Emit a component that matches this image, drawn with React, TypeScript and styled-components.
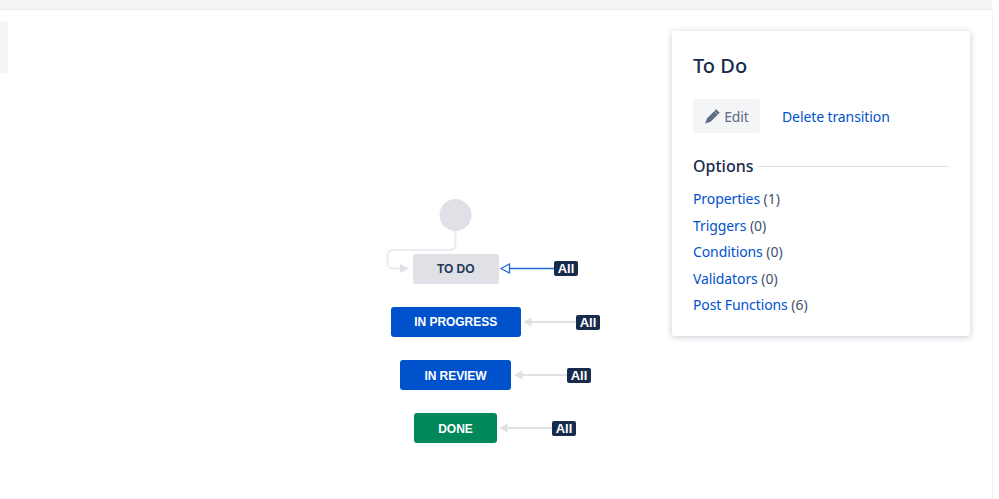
import React from 'react';
import styled, { createGlobalStyle } from 'styled-components';

const GlobalStyle = createGlobalStyle`
  html, body {
    margin: 0;
    padding: 0;
    background: #ffffff;
    font-family: "Noto Sans", "Liberation Sans", sans-serif;
    overflow: hidden;
  }
`;

const Page = styled.div`
  width: 999px;
  height: 499px;
  display: flex;
  flex-direction: column;
`;
const TopBar = styled.div`
  width: 992px;
  height: 9px;
  flex: none;
  background: #f4f5f7;
  border-bottom: 1px solid #ebecf0;
`;
const Main = styled.div`
  flex: 1;
  width: 992px;
  display: flex;
  justify-content: space-between;
  align-items: flex-start;
  border-right: 1px solid #f0f1f3;
`;
const SideStub = styled.div`
  width: 8px;
  height: 52px;
  margin-top: 11px;
  flex: none;
  background: #f4f5f7;
  border-radius: 0 3px 3px 0;
`;
const Canvas = styled.div`
  position: relative;
  flex: 1;
  height: 489px;
`;
const Edges = styled.svg`
  position: absolute;
  left: -8px;
  top: -10px;
`;
const Node = styled.div<{ $x: number; $y: number; $w: number; $kind: 'todo' | 'progress' | 'done' }>`
  position: absolute;
  left: ${(p) => p.$x - 8}px;
  top: ${(p) => p.$y - 10}px;
  width: ${(p) => p.$w}px;
  height: 30px;
  box-sizing: border-box;
  display: flex;
  align-items: center;
  justify-content: center;
  padding-top: 1px;
  border-radius: 3px;
  font-family: "Liberation Sans", Arial, sans-serif;
  font-weight: 700;
  font-size: 12px;
  letter-spacing: -0.05px;
  background: ${(p) => (p.$kind === 'todo' ? '#dfe1e6' : p.$kind === 'progress' ? '#0052cc' : '#00875a')};
  color: ${(p) => (p.$kind === 'todo' ? '#253858' : '#ffffff')};
`;
const AllTag = styled.div<{ $x: number; $y: number }>`
  position: absolute;
  left: ${(p) => p.$x - 8}px;
  top: ${(p) => p.$y - 10}px;
  width: 24px;
  height: 15px;
  display: flex;
  align-items: center;
  justify-content: center;
  border-radius: 2px;
  background: #172b4d;
  color: #ffffff;
  font-family: "Liberation Sans", Arial, sans-serif;
  font-weight: 700;
  font-size: 13px;
`;
const Panel = styled.aside`
  width: 298px;
  height: 305px;
  flex: none;
  box-sizing: border-box;
  margin: 21px 22px 0 0;
  padding: 21px 21px 0;
  background: #ffffff;
  border-radius: 3px;
  box-shadow: 0 1px 6px rgba(9, 30, 66, 0.24);
  color: #172b4d;
`;
const Title = styled.h2`
  margin: 0;
  font-size: 20px;
  line-height: 28px;
  font-weight: 500;
`;
const Actions = styled.div`
  margin-top: 19px;
  display: flex;
  align-items: center;
  gap: 22px;
`;
const EditButton = styled.button`
  width: 67px;
  height: 34px;
  padding: 0;
  border: 0;
  border-radius: 3px;
  background: #f4f5f7;
  color: #5e6c84;
  font: inherit;
  font-size: 14px;
  letter-spacing: -0.1px;
  display: flex;
  align-items: center;
  justify-content: center;
  gap: 3px;
`;
const Link = styled.a`
  color: #0052cc;
  font-size: 14px;
  line-height: 20px;
  letter-spacing: -0.1px;
  text-decoration: none;
`;
const DeleteLink = styled(Link)`
  padding-top: 2px;
`;
const SectionHead = styled.div`
  margin-top: 22px;
  display: flex;
  align-items: center;
  gap: 3px;
  font-size: 16px;
  line-height: 22px;
  font-weight: 500;
  &::after {
    content: '';
    flex: 1;
    height: 1px;
    background: #dfe1e6;
  }
`;
const OptionList = styled.ul`
  list-style: none;
  margin: 12px 0 0;
  padding: 0;
  display: flex;
  flex-direction: column;
  gap: 6.5px;
`;
const OptionItem = styled.li`
  font-size: 14px;
  line-height: 20px;
  color: #42526e;
  letter-spacing: -0.05px;
`;

const nodes = [
  { label: 'TO DO', x: 412.7, y: 253.5, w: 86, kind: 'todo' as const },
  { label: 'IN PROGRESS', x: 390.7, y: 306.7, w: 130, kind: 'progress' as const },
  { label: 'IN REVIEW', x: 400, y: 360, w: 111, kind: 'progress' as const },
  { label: 'DONE', x: 414, y: 413.3, w: 83, kind: 'done' as const },
];

const transitions = [
  { tip: 501, end: 554, y: 268.5, selected: true },
  { tip: 523, end: 576, y: 322, selected: false },
  { tip: 514, end: 567, y: 375, selected: false },
  { tip: 499, end: 552, y: 428, selected: false },
];

const options = [
  { name: 'Properties', count: 1 },
  { name: 'Triggers', count: 0 },
  { name: 'Conditions', count: 0 },
  { name: 'Validators', count: 0 },
  { name: 'Post Functions', count: 6 },
];

const PencilIcon = () => (
  <svg width="17" height="17" viewBox="0 0 16 16">
    <path d="M11.4 1.2 14.8 4.4 6.2 13 2.4 14.2 1.2 15 1.6 13.2 2.8 9.8Z" fill="#5e6c84" />
    <path d="M9.6 3 12.8 6.2" stroke="#f4f5f7" strokeWidth="0.5" />
  </svg>
);

const App = () => (
  <Page>
    <GlobalStyle />
    <TopBar />
    <Main>
      <SideStub />
      <Canvas>
        <Edges width="999" height="499" viewBox="0 0 999 499">
          <circle cx="455.5" cy="215" r="16" fill="#dfe1e6" />
          <path
            d="M455.5 231V244Q455.5 250 449.5 250H393Q387.5 250 387.5 255.5V263Q387.5 268.5 393 268.5H401"
            fill="none"
            stroke="#ebecf0"
            strokeWidth="2"
          />
          <path d="M400 264V273L409 268.5Z" fill="#dfe1e6" />
          {transitions.map((t) => (
            <g key={t.y}>
              <line
                x1={t.tip + 8}
                x2={t.end}
                y1={t.y}
                y2={t.y}
                stroke={t.selected ? '#2468d8' : '#dfe1e6'}
                strokeWidth={t.selected ? 1.5 : 2}
              />
              <path
                d={`M${t.tip} ${t.y}L${t.tip + 8.5} ${t.y - 4.5}V${t.y + 4.5}Z`}
                fill={t.selected ? '#ffffff' : '#dfe1e6'}
                stroke={t.selected ? '#2468d8' : 'none'}
                strokeWidth="1.3"
              />
            </g>
          ))}
        </Edges>
        {nodes.map((n) => (
          <Node key={n.label} $x={n.x} $y={n.y} $w={n.w} $kind={n.kind}>
            {n.label}
          </Node>
        ))}
        {transitions.map((t) => (
          <AllTag key={t.y} $x={t.end} $y={Math.round(t.y - 7.5)}>
            All
          </AllTag>
        ))}
      </Canvas>
      <Panel>
        <Title>To Do</Title>
        <Actions>
          <EditButton>
            <PencilIcon />
            Edit
          </EditButton>
          <DeleteLink>Delete transition</DeleteLink>
        </Actions>
        <SectionHead>Options</SectionHead>
        <OptionList>
          {options.map((o) => (
            <OptionItem key={o.name}>
              <Link>{o.name}</Link> ({o.count})
            </OptionItem>
          ))}
        </OptionList>
      </Panel>
    </Main>
  </Page>
);

export default App;
